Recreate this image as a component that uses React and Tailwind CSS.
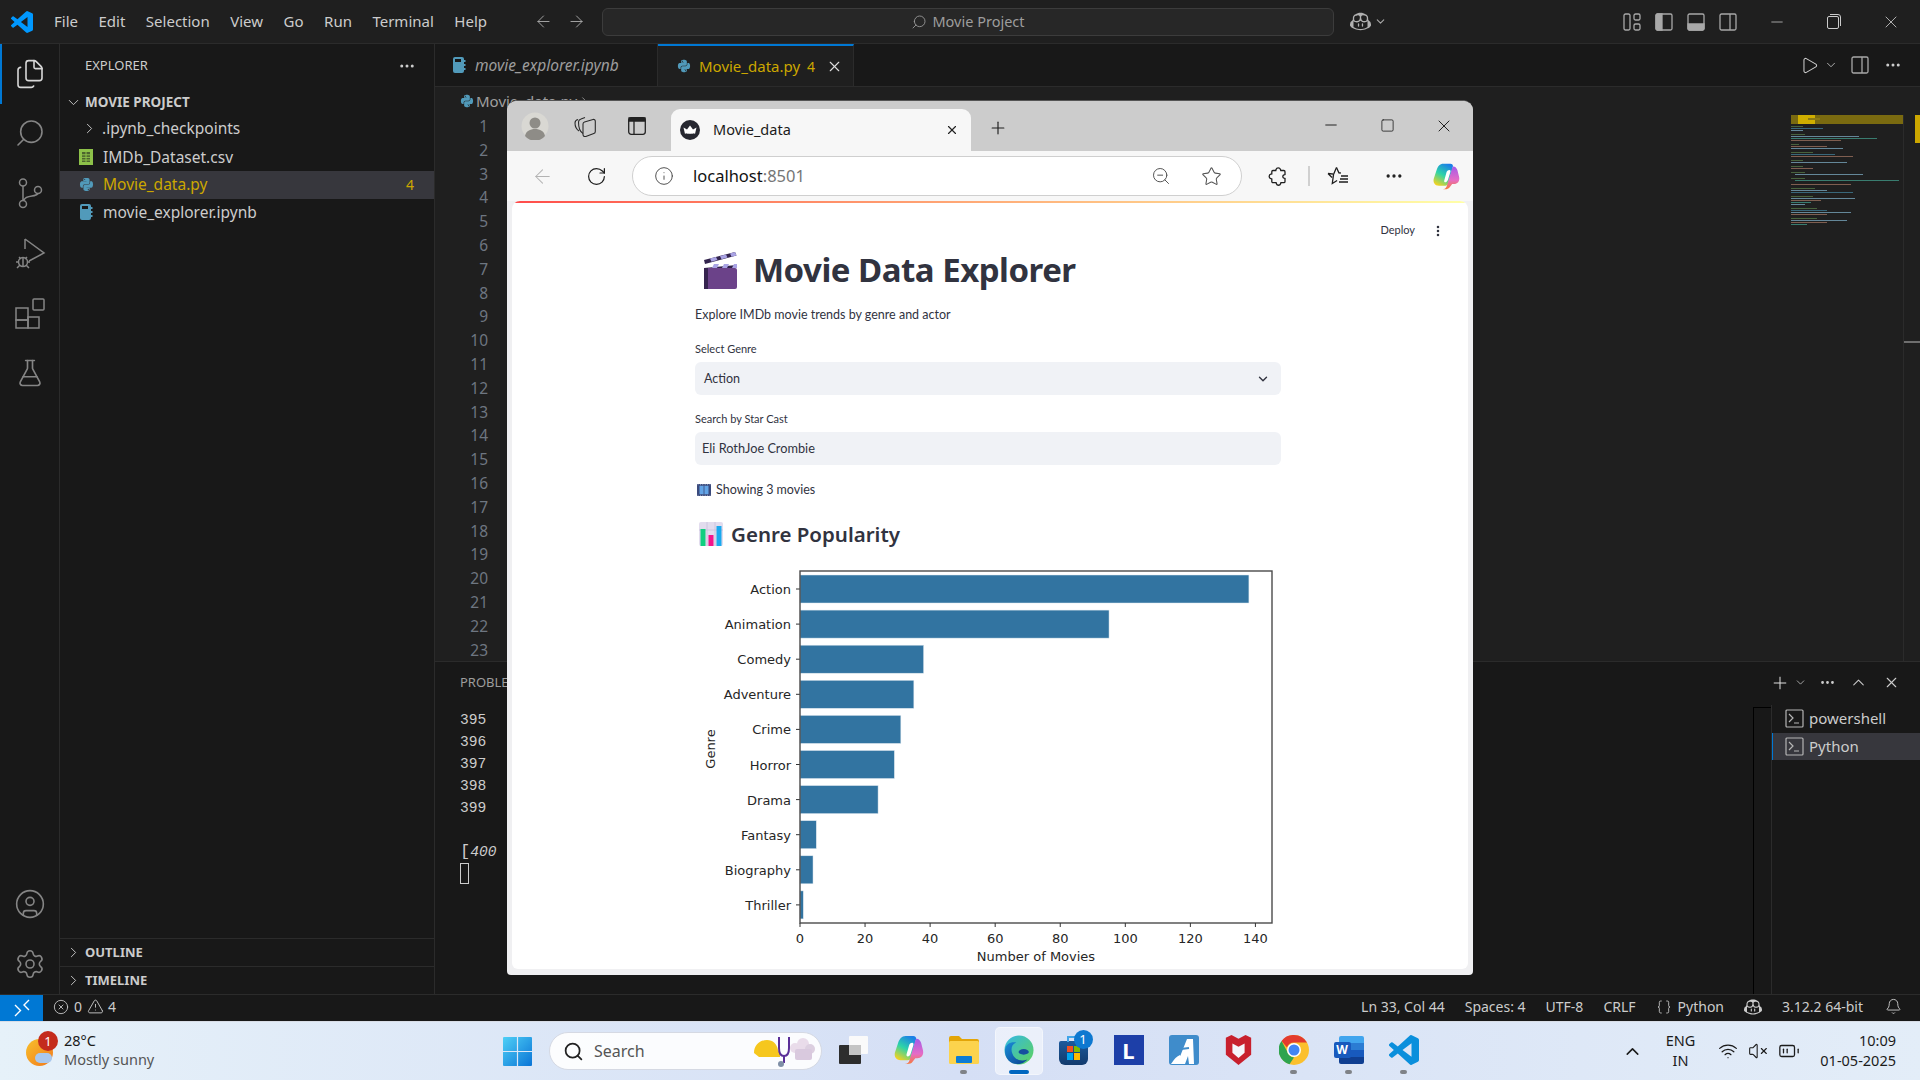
import React from "react";
import {
  ArrowLeft, ArrowRight, BatteryMedium, Bell, Braces, ChevronDown, ChevronRight, ChevronUp,
  CircleUser, CircleX, Ellipsis, EllipsisVertical, Files, FlaskConical, Info, Minus,
  Play, Plus, RotateCw, Search, Settings, Square, Star, TriangleAlert, VolumeX, Wifi, X, ZoomOut,
} from "lucide-react";
import { FaPython } from "react-icons/fa";
import { GoCopilot } from "react-icons/go";

const menus = ["File", "Edit", "Selection", "View", "Go", "Run", "Terminal", "Help"];
const lineNumbers = Array.from({ length: 23 }, (_, i) => i + 1);
const termLines = [395, 396, 397, 398, 399];
const genres = [
  ["Action", 138], ["Animation", 95], ["Comedy", 38], ["Adventure", 35], ["Crime", 31],
  ["Horror", 29], ["Drama", 24], ["Fantasy", 5], ["Biography", 4], ["Thriller", 1],
];
const ticks = [0, 20, 40, 60, 80, 100, 120, 140];

// minimap rows: y, x, width, colour
const mini = [
  [11, 0, 12, "#6a9955"], [13, 0, 32, "#4fa3c4"], [15, 0, 12, "#9cdcfe"],
  [19, 0, 14, "#6a9955"], [21, 0, 68, "#9cdcfe"], [23, 0, 86, "#4ec9b0"], [25, 0, 50, "#ce9178"],
  [29, 0, 8, "#6a9955"], [31, 0, 36, "#ce9178"], [33, 0, 52, "#9cdcfe"],
  [37, 0, 22, "#6a9955"], [39, 0, 44, "#4fa3c4"], [41, 0, 62, "#ce9178"],
  [45, 0, 12, "#6a9955"], [47, 0, 56, "#9cdcfe"], [51, 0, 12, "#6a9955"], [53, 0, 22, "#ce9178"],
  [57, 0, 14, "#6a9955"], [59, 4, 68, "#9cdcfe"], [63, 0, 14, "#6a9955"], [65, 4, 104, "#4ec9b0"],
  [69, 0, 60, "#ce9178"], [73, 0, 24, "#6a9955"], [75, 0, 36, "#9cdcfe"], [77, 0, 62, "#4fa3c4"],
  [81, 0, 22, "#6a9955"], [83, 0, 64, "#9cdcfe"], [85, 0, 30, "#ce9178"], [87, 0, 20, "#4ec9b0"], [89, 0, 14, "#9cdcfe"],
  [93, 0, 26, "#6a9955"], [95, 0, 36, "#4fa3c4"], [97, 0, 60, "#9cdcfe"], [99, 0, 36, "#ce9178"],
  [103, 0, 26, "#6a9955"], [105, 0, 56, "#9cdcfe"], [107, 0, 36, "#ce9178"], [109, 0, 16, "#4ec9b0"],
];

function VsLogo({ size = 22, color = "#0098ff" }) {
  return (
    <svg width={size} height={size} viewBox="0 0 24 24" fill={color}>
      <path d="M23.15 2.587L18.21.21a1.494 1.494 0 0 0-1.705.29l-9.46 8.63-4.12-3.128a.999.999 0 0 0-1.276.057L.327 7.261A1 1 0 0 0 .326 8.74L3.899 12 .326 15.26a1 1 0 0 0 .001 1.479L1.65 17.94a.999.999 0 0 0 1.276.057l4.12-3.128 9.46 8.63a1.492 1.492 0 0 0 1.704.29l4.942-2.377A1.5 1.5 0 0 0 24 20.06V3.939a1.5 1.5 0 0 0-.85-1.352zm-5.146 14.861L10.826 12l7.178-5.448v10.896z" />
    </svg>
  );
}

function NotebookIcon() {
  return (
    <svg width="14" height="18" viewBox="0 0 14 18">
      <rect x="1" y="1" width="11" height="16" rx="2" fill="#519aba" />
      <rect x="3" y="3" width="6" height="3" fill="#181818" />
      <rect x="12" y="4" width="1.5" height="2" fill="#519aba" />
      <rect x="12" y="8" width="1.5" height="2" fill="#519aba" />
      <rect x="12" y="12" width="1.5" height="2" fill="#519aba" />
    </svg>
  );
}

function CsvIcon() {
  return (
    <svg width="14" height="16" viewBox="0 0 14 16">
      <rect width="14" height="16" fill="#8dc149" />
      <path d="M3 3h8v10H3z" fill="#181818" opacity="0.55" />
      <path d="M3 5.8h8M3 8.4h8M3 11h8M7 3v10" stroke="#8dc149" strokeWidth="1" />
    </svg>
  );
}

function ScmIcon() {
  return (
    <svg width="32" height="32" viewBox="0 0 32 32" fill="none" stroke="#858585" strokeWidth="1.5">
      <circle cx="9" cy="5.500" r="3.500" />
      <circle cx="9" cy="27" r="3.500" />
      <circle cx="24" cy="13" r="3.500" />
      <path d="M9 9v14.500M10 23c1-3 4-3.500 8-4 3-.4 5-1 6-2.500" />
    </svg>
  );
}

function DebugIcon() {
  return (
    <svg width="32" height="32" viewBox="0 0 32 32" fill="none" stroke="#858585" strokeWidth="1.5">
      <path d="M11 2v10M11 2l19 14-15 8" />
      <circle cx="9" cy="25" r="4.5" />
      <path d="M5 20l2 2M13 20l-2 2M2 25h2.5M13.500 25H16M3 31l3-3M15 31l-3-3M9 21v8" />
    </svg>
  );
}

function ExtIcon() {
  return (
    <svg width="32" height="32" viewBox="0 0 32 32" fill="none" stroke="#858585" strokeWidth="1.5">
      <rect x="2" y="11" width="12" height="12" />
      <rect x="2" y="23" width="12" height="8" />
      <rect x="14" y="20" width="11" height="11" />
      <rect x="19" y="2" width="11" height="11" rx="1" />
    </svg>
  );
}

function RemoteIcon() {
  return (
    <svg width="18" height="18" viewBox="0 0 18 18" fill="none" stroke="#fff" strokeWidth="1.4">
      <path d="M2 6l5.500 5.500L2 17M16 1l-5 5 5 5" />
    </svg>
  );
}

function LayoutIcon({ kind }) {
  return (
    <svg width="18" height="18" viewBox="0 0 18 18" fill="none" stroke="#a8a8a8" strokeWidth="1.3">
      {kind === "custom" && (
        <g>
          <rect x="1" y="1" width="6" height="16" rx="1.500" />
          <rect x="11" y="1" width="6" height="6" rx="1.500" />
          <rect x="11" y="11" width="6" height="6" rx="1.500" />
        </g>
      )}
      {kind !== "custom" && <rect x="1" y="1" width="16" height="16" rx="1.500" />}
      {kind === "left" && <path d="M1 2.500A1.500 1.500 0 0 1 2.500 1H7v16H2.500A1.500 1.500 0 0 1 1 15.500z" fill="#a8a8a8" />}
      {kind === "bottom" && <path d="M1 11h16v4.500a1.500 1.500 0 0 1-1.500 1.500h-13A1.500 1.500 0 0 1 1 15.500z" fill="#a8a8a8" />}
      {kind === "right" && <path d="M11 1v16" />}
    </svg>
  );
}

function TerminalGlyph() {
  return (
    <svg width="19" height="19" viewBox="0 0 19 19" fill="none" stroke="#b5b5b5" strokeWidth="1.2">
      <rect x="1" y="1" width="17" height="17" rx="1" />
      <path d="M4 5l4 4-4 4M9 14h5" />
    </svg>
  );
}

function CopilotColor({ size = 28 }) {
  return (
    <svg width={size} height={size} viewBox="0 0 32 32">
      <defs>
        <linearGradient id="copA" x1="0.7" y1="0" x2="0.2" y2="1">
          <stop offset="0" stopColor="#1b7fe8" />
          <stop offset="0.5" stopColor="#2dd4a8" />
          <stop offset="1" stopColor="#f8d21c" />
        </linearGradient>
        <linearGradient id="copB" x1="0.5" y1="0" x2="0.5" y2="1">
          <stop offset="0" stopColor="#a45be8" />
          <stop offset="0.6" stopColor="#e56cc6" />
          <stop offset="1" stopColor="#f6793a" />
        </linearGradient>
      </defs>
      <path d="M13 2h8c2 0 2.500 1 3 2.500L19 24c-.5 2-2 3-4 3H8c-5 0-7-4-6-8l3-9c1.500-5 4-8 8-8z" fill="url(#copA)" />
      <path d="M24 5c3 0 4 2 5 4l2 8c1 5-2 8-6 8h-2l-3 4c-1 1.500-3 2-5 2h-3c3 0 4.500-2 5-4L23 7z" fill="url(#copB)" />
      <path d="M20 9c-2 0-3 1-3.500 3l-2.500 9c-.5 2 1 2.500 2 2 1.500-.8 2-2 2.500-3.500l2.500-8c.4-1.500 0-2.500-1-2.500z" fill="#fff" />
    </svg>
  );
}

function Clapper() {
  return (
    <svg width="36" height="38" viewBox="0 0 36 38">
      <path d="M1 17l33-3v3H1z" fill="#2f2148" />
      <rect x="1" y="17" width="33" height="21" rx="2" fill="#6b4289" />
      <rect x="1" y="17" width="4" height="21" fill="#36244f" />
      <path d="M9 17l2-4h5l-2 4zM19 17l2-4h5l-2 4zM29 17l2-4h3v4z" fill="#a9a3e4" />
      <path d="M1 9l31-8 1.500 3.500L2 13z" fill="#33244d" />
      <path d="M7 7.500l6-1.600 1.500 3.200-6 1.600zM17 5l6-1.600 1.500 3.200-6 1.600zM27 2.500l5-1.400 1.500 3.300-5 1.400z" fill="#a9a3e4" />
    </svg>
  );
}

function ChartEmoji() {
  return (
    <svg width="24" height="24" viewBox="0 0 24 24">
      <rect width="24" height="24" rx="2" fill="#e2dcee" />
      <path d="M0 8h24M8 0v24M16 0v24" stroke="#c9c0da" strokeWidth="0.8" />
      <rect x="1.500" y="7" width="5" height="17" fill="#10cf80" />
      <rect x="9.500" y="13" width="5" height="11" fill="#f4148c" />
      <rect x="17.500" y="4" width="5" height="20" fill="#1aa9ee" />
    </svg>
  );
}

function FilmEmoji() {
  return (
    <svg width="14" height="12" viewBox="0 0 14 12">
      <rect width="14" height="12" fill="#3a4a7c" />
      <rect x="2.500" y="1.800" width="9" height="8.400" fill="#62a4e6" />
      <path d="M7 1.800v8.400" stroke="#3a4a7c" strokeWidth="0.8" />
      <path d="M.6.7h.8M3 .7h.8M5.400.7h.8M7.800.7h.8M10.200.7h.8M12.600.7h.8M.6 11.300h.8M3 11.300h.8M5.400 11.300h.8M7.800 11.300h.8M10.200 11.300h.8M12.600 11.300h.8" stroke="#dfe6f5" strokeWidth="0.7" />
    </svg>
  );
}

function Avatar() {
  return (
    <svg width="28" height="28" viewBox="0 0 28 28">
      <circle cx="14" cy="14" r="13.500" fill="#d9d8d3" />
      <circle cx="14" cy="11" r="5.500" fill="#8e8c87" />
      <path d="M4 24c1-5 5-7 10-7s9 2 10 7a13 13 0 0 1-20 0z" fill="#8e8c87" />
    </svg>
  );
}

function Collections() {
  return (
    <svg width="22" height="22" viewBox="0 0 22 22" fill="none" stroke="#2a2a2a" strokeWidth="1.1">
      <path d="M5 16C2 14 1 11 1 8c0-2 1-3 3-3.500" />
      <path d="M9 18.500C6.500 17 4.500 13 4.500 7c0-1.500 1-2.500 2.500-3l4-1.500" />
      <path d="M9 9c0-1 .6-1.700 1.500-2L19 4.500c1.200-.3 2.300.4 2.300 1.700v10.300c0 1-.6 1.800-1.500 2.100l-8 2.900c-1.400.5-2.800-.5-2.800-2z" />
    </svg>
  );
}

function TabsIcon() {
  return (
    <svg width="18" height="18" viewBox="0 0 18 18" fill="none" stroke="#222" strokeWidth="1.3">
      <rect x="0.700" y="0.700" width="16.600" height="16.600" rx="2.500" />
      <path d="M1 1h16v3H1z" fill="#222" />
      <path d="M6 4v13" />
    </svg>
  );
}

function Crown() {
  return (
    <svg width="20" height="20" viewBox="0 0 20 20">
      <circle cx="10" cy="10" r="10" fill="#262730" />
      <path d="M3.500 7.500l3.500 2L10 5.500l3 4 3.500-2-1.500 6.500H5z" fill="#fff" />
      <path d="M5.500 13.500c2 1 7 1 9 0" stroke="#262730" strokeWidth="0.8" fill="none" />
    </svg>
  );
}

function PuzzleOutline() {
  return (
    <svg width="20" height="20" viewBox="0 0 20 20" fill="none" stroke="#1f1f1f" strokeWidth="1.3">
      <path d="M8 3.500a2.400 2.400 0 0 1 4.500 0l.3 1h3c.7 0 1.200.5 1.200 1.200v2.800l-1 .3a1.800 1.800 0 0 0 0 3.400l1 .3v3c0 .7-.5 1.200-1.200 1.200h-2.900l-.3 1a2.200 2.200 0 0 1-4.200 0l-.3-1H5c-.7 0-1.200-.5-1.200-1.200v-2.600l-1-.3a2.300 2.300 0 0 1 0-4.400l1-.3V5.700c0-.7.5-1.200 1.200-1.200h2.800z" />
    </svg>
  );
}

function Favorites() {
  return (
    <svg width="22" height="20" viewBox="0 0 22 20" fill="none" stroke="#1f1f1f" strokeWidth="1.3">
      <path d="M9.500 1.500l2.400 5.300 2 .2M1 7.500l5.600.5-1.300 9.500 4.800-3M1 7.500l4 4" />
      <path d="M9.500 1.500L6.800 7.800M14 10h7M13 13h8M12 16h9" />
    </svg>
  );
}

function WinLogo() {
  return (
    <svg width="29" height="29" viewBox="0 0 29 29">
      <defs>
        <linearGradient id="win" x1="0" y1="0" x2="1" y2="1">
          <stop offset="0" stopColor="#4fd0f6" />
          <stop offset="1" stopColor="#0a74d6" />
        </linearGradient>
      </defs>
      <path d="M1 0h12.900v13.900H0V1a1 1 0 0 1 1-1zM15.100 0H28a1 1 0 0 1 1 1v12.900H15.100zM0 15.100h13.900V29H1a1 1 0 0 1-1-1zM15.100 15.100H29V28a1 1 0 0 1-1 1H15.100z" fill="url(#win)" />
    </svg>
  );
}

function Weather() {
  return (
    <div className="relative w-[34px] h-[34px]">
      <div className="absolute left-[2px] top-[5px] w-[27px] h-[27px] rounded-full bg-linear-to-br from-[#f7c02c] to-[#f0781c]" />
      <div className="absolute left-[11px] top-[19px] w-[17px] h-[10px] rounded-full bg-[#a9c8ee]" />
      <div className="absolute left-[14px] -top-[3px] w-[20px] h-[20px] rounded-full bg-[#c42b1c] text-white text-[13px] leading-[20px] text-center">1</div>
    </div>
  );
}

function SearchDoodles() {
  return (
    <svg width="62" height="34" viewBox="0 0 62 34">
      <path d="M1 19c0-8 6-13 13-13 6 0 10 4 11 10l2 4v3H6z" fill="#f6c71e" />
      <path d="M26 3v11c0 5 2 8 5 8s5-3 5-8V3" fill="none" stroke="#5a2e98" strokeWidth="2" />
      <path d="M31 22v7" stroke="#5a2e98" strokeWidth="2" />
      <circle cx="28" cy="30" r="3" fill="#7f8fa6" />
      <circle cx="42" cy="14" r="5" fill="#e9dcea" />
      <circle cx="50" cy="10" r="6" fill="#e9dcea" />
      <circle cx="57" cy="15" r="5" fill="#dccfe0" />
      <rect x="42" y="15" width="17" height="11" rx="2" fill="#d9c9de" />
    </svg>
  );
}

function TaskView() {
  return (
    <svg width="30" height="28" viewBox="0 0 30 28">
      <rect x="10" y="0" width="19" height="18" rx="1" fill="#fafafa" />
      <rect x="0" y="9" width="22" height="19" rx="1" fill="#2d2d2d" />
      <rect x="10" y="9" width="12" height="10" fill="#c4c4c4" />
    </svg>
  );
}

function FolderIcon() {
  return (
    <svg width="30" height="28" viewBox="0 0 30 28">
      <path d="M0 2a2 2 0 0 1 2-2h8l3 3h15a2 2 0 0 1 2 2v3H0z" fill="#e3a508" />
      <rect y="5" width="30" height="23" rx="1.500" fill="#fcd34d" />
      <rect x="7" y="20" width="16" height="7" rx="1" fill="#0c7cd5" />
    </svg>
  );
}

function EdgeIcon() {
  return (
    <svg width="30" height="30" viewBox="0 0 32 32">
      <defs>
        <linearGradient id="edgeA" x1="0" y1="0" x2="1" y2="1">
          <stop offset="0" stopColor="#33b7e8" />
          <stop offset="1" stopColor="#5fd35a" />
        </linearGradient>
        <linearGradient id="edgeB" x1="0" y1="0" x2="1" y2="1">
          <stop offset="0" stopColor="#1a8fd8" />
          <stop offset="1" stopColor="#0b3f8f" />
        </linearGradient>
      </defs>
      <circle cx="16" cy="16" r="15.500" fill="url(#edgeA)" />
      <path d="M1 17C1 9 8 7 13 8c-5 2-6 7-4 12 2 6 9 9 16 6-4 4-8 5-11 5C7 31 1 25 1 17z" fill="url(#edgeB)" />
      <ellipse cx="21" cy="18" rx="5.500" ry="3" fill="#16509f" />
    </svg>
  );
}

function StoreIcon() {
  return (
    <div className="relative w-[30px] h-[30px]">
      <div className="absolute left-0 bottom-0 w-[29px] h-[24px] rounded-b-[6px] rounded-t-[2px] bg-linear-to-b from-[#1d5a9c] to-[#123a6d] grid grid-cols-2 gap-[1px] px-[8px] py-[5px]">
        <div className="bg-[#f25022]" />
        <div className="bg-[#7fba00]" />
        <div className="bg-[#00a4ef]" />
        <div className="bg-[#ffb900]" />
      </div>
      <div className="absolute left-[8px] top-[1px] w-[12px] h-[6px] border-t-2 border-l-2 border-[#41a4e8]" />
      <div className="absolute left-[15px] -top-[5px] w-[19px] h-[19px] rounded-full bg-[#0e78d0] text-white text-[13px] leading-[19px] text-center">1</div>
    </div>
  );
}

function McAfee() {
  return (
    <svg width="27" height="30" viewBox="0 0 27 32">
      <path d="M0 3l6-3 7.500 4L21 0l6 3v18l-13.500 11L0 21z" fill="#c8202d" />
      <path d="M7 9l6.500 3.500L20 9v10l-6.500 5.500L7 19z" fill="#f4f5fa" />
    </svg>
  );
}

function ChromeIcon() {
  return (
    <svg width="30" height="30" viewBox="0 0 30 30">
      <circle cx="15" cy="15" r="15" fill="#fbc02d" />
      <path d="M15 0a15 15 0 0 1 13 7.500H15a7.500 7.500 0 0 0-7 5L2.500 6A15 15 0 0 1 15 0z" fill="#e33b2e" />
      <path d="M2.500 6L9 18a7.500 7.500 0 0 0 6 4.500L10.500 29.300A15 15 0 0 1 2.500 6z" fill="#2ea44f" />
      <circle cx="15" cy="15" r="7" fill="#fff" />
      <circle cx="15" cy="15" r="5.500" fill="#4285f4" />
    </svg>
  );
}

function WordIcon() {
  return (
    <div className="relative w-[30px] h-[28px]">
      <div className="absolute right-0 top-0 w-[25px] h-[28px] rounded-[2px] overflow-hidden flex flex-col">
        <div className="h-[7px] bg-[#41a5ee]" />
        <div className="h-[7px] bg-[#2b7cd3]" />
        <div className="h-[7px] bg-[#185abd]" />
        <div className="h-[7px] bg-[#103f91]" />
      </div>
      <div className="absolute left-0 top-[6px] w-[17px] h-[16px] rounded-[2px] bg-[#185abd] text-white font-bold text-[12px] leading-[16px] text-center">W</div>
    </div>
  );
}

function AcrobatLike() {
  return (
    <div className="relative w-[30px] h-[30px] rounded-[3px] bg-[#3f8ccb] overflow-hidden">
      <svg width="30" height="30" viewBox="0 0 30 30">
        <path d="M8 29L18 4h6l1 25h-5l-1-8-3 8zM2 29c3-5 6-8 9-9 1 3 0 7-2 9z" fill="#fff" />
        <path d="M12 14l8-1" stroke="#3f8ccb" strokeWidth="2" />
      </svg>
    </div>
  );
}

function TaskCell({ children, dot, active }) {
  return (
    <div className="relative w-[55px] h-[48px] flex items-center justify-center">
      {active && <div className="absolute left-[4px] top-0 w-[48px] h-[48px] rounded-[5px] bg-white/50 border border-white/40" />}
      <div className="relative -mt-[3px]">{children}</div>
      {dot && <div className="absolute left-[24px] bottom-[1px] w-[7px] h-[4px] rounded-full bg-[#7f8287]" />}
      {active && <div className="absolute left-[18px] bottom-[1px] w-[20px] h-[4px] rounded-full bg-[#0067c0]" />}
    </div>
  );
}

function Chart() {
  const X0 = 105;
  const unit = 3.253;
  return (
    <svg width="586" height="408" viewBox="0 0 586 408" className="font-['DejaVu_Sans',sans-serif]">
      {genres.map(([name, val], i) => {
        const top = 14 + i * 35.1;
        return (
          <g key={name}>
            <rect x={X0} y={top} width={val * unit} height="28" fill="#3274a1" stroke="#dbe6ee" strokeWidth="0.5" />
            <path d={`M${X0 - 4} ${top + 14}H${X0}`} stroke="#333" strokeWidth="1" />
            <text x="96" y={top + 19} textAnchor="end" fontSize="13" fill="#262626">{name}</text>
          </g>
        );
      })}
      <rect x={X0} y="10" width="472" height="352" fill="none" stroke="#4a4a4a" strokeWidth="1.4" />
      {ticks.map((t) => (
        <g key={t}>
          <path d={`M${X0 + t * unit} 362v4`} stroke="#333" strokeWidth="1" />
          <text x={X0 + t * unit} y="382" textAnchor="middle" fontSize="13" fill="#262626">{t}</text>
        </g>
      ))}
      <text x="341" y="400" textAnchor="middle" fontSize="13" fill="#262626">Number of Movies</text>
      <text transform="translate(20 188) rotate(-90)" textAnchor="middle" fontSize="13" fill="#262626">Genre</text>
    </svg>
  );
}

function BrowserWindow() {
  return (
    <div className="absolute left-[507px] top-[100px] w-[966px] h-[875px] rounded-t-[10px] rounded-b-[4px] overflow-hidden flex flex-col bg-[#f0f0f2] text-[#1f1f1f] border-t border-[#555]">
      {/* tab strip */}
      <div className="h-[50px] bg-[#cccccc] flex items-end shrink-0">
        <div className="w-[164px] h-[50px] flex items-center">
          <div className="ml-[14px]"><Avatar /></div>
          <div className="ml-[25px]"><Collections /></div>
          <div className="ml-[32px]"><TabsIcon /></div>
        </div>
        <div className="w-[300px] h-[42px] bg-[#f7f7f7] rounded-t-[9px] flex items-center pl-[9px] pr-[12px]">
          <Crown />
          <span className="ml-[13px] text-[14.5px] text-[#1b1b1b]">Movie_data</span>
          <X size={14} strokeWidth={2} className="ml-auto text-[#222]" />
        </div>
        <div className="h-[50px] flex items-center ml-[17px] pt-[4px]">
          <Plus size={20} strokeWidth={1.4} className="text-[#1f1f1f]" />
        </div>
        <div className="ml-auto h-[50px] flex items-start pt-[15px]">
          <Minus size={18} strokeWidth={1.2} className="text-[#111]" />
          <Square size={15} strokeWidth={1.2} className="ml-[40px] mt-[2px] text-[#111]" />
          <X size={20} strokeWidth={1.1} className="ml-[39px] text-[#111]" />
          <div className="w-[19px]" />
        </div>
      </div>
      {/* toolbar */}
      <div className="h-[50px] bg-[#f7f7f7] flex items-center shrink-0">
        <ArrowLeft size={23} strokeWidth={1.1} className="ml-[24px] text-[#b3b3b3]" />
        <RotateCw size={21} strokeWidth={1.4} className="ml-[32px] text-[#1f1f1f]" />
        <div className="ml-[25px] w-[610px] h-[40px] rounded-full bg-white border border-[#cfcfcf] flex items-center">
          <Info size={20} strokeWidth={1.1} className="ml-[21px] text-[#444]" />
          <span className="ml-[19px] text-[16.5px] text-[#111]">localhost<span className="text-[#767676]">:8501</span></span>
          <ZoomOut size={20} strokeWidth={1.2} className="ml-auto text-[#555] " />
          <Star size={21} strokeWidth={1.2} className="ml-[30px] mr-[19px] text-[#555]" />
        </div>
        <div className="ml-[26px]"><PuzzleOutline /></div>
        <div className="ml-[20px] w-[2px] h-[20px] bg-[#d0d0d0]" />
        <div className="ml-[17px]"><Favorites /></div>
        <Ellipsis size={20} strokeWidth={2} className="ml-[35px] text-[#222]" />
        <div className="ml-[28px]"><CopilotColor /></div>
      </div>
      {/* page */}
      <div className="mx-[5px] h-[768px] rounded-t-[8px] rounded-b-[6px] bg-white overflow-hidden flex flex-col text-[#31333f] font-['Lato',sans-serif]">
        <div className="h-[2px] shrink-0 bg-linear-to-r from-[#ff4b4b] to-[#ffffa8] " />
        <div className="h-[28px] mt-[14px] flex items-center justify-end pr-[23px]">
          <span className="text-[11px]">Deploy</span>
          <EllipsisVertical size={14} strokeWidth={2.4} className="ml-[16px]" />
        </div>
        <div className="ml-[183px] w-[586px] flex flex-col">
          <div className="h-[52px] flex items-center pl-[8px]">
            <Clapper />
            <h1 className="ml-[14px] text-[33px] font-bold tracking-[-0.5px] font-['Noto_Sans',sans-serif]">Movie Data Explorer</h1>
          </div>
          <p className="mt-[8px] h-[20px] leading-[21px] text-[12.5px]">Explore IMDb movie trends by genre and actor</p>
          <label className="mt-[16px] h-[16px] leading-[18px] text-[11px]">Select Genre</label>
          <div className="mt-[6px] h-[33px] rounded-[6px] bg-[#f0f2f6] flex items-center justify-between pl-[9px] pr-[11px] text-[12.5px]">
            <span className="mt-[1px]">Action</span>
            <ChevronDown size={14} strokeWidth={2.4} />
          </div>
          <label className="mt-[15px] h-[16px] leading-[18px] text-[11px]">Search by Star Cast</label>
          <div className="mt-[6px] h-[33px] rounded-[6px] bg-[#f0f2f6] flex items-center pl-[7px] text-[12.75px]">Eli RothJoe Crombie</div>
          <div className="mt-[16px] h-[18px] flex items-center pl-[2px] text-[12.5px]">
            <FilmEmoji />
            <span className="ml-[5px] mt-[1px]">Showing 3 movies</span>
          </div>
          <div className="mt-[17px] h-[36px] flex items-center pl-[4px]">
            <ChartEmoji />
            <h2 className="ml-[8px] text-[20.5px] font-semibold font-['Noto_Sans',sans-serif]">Genre Popularity</h2>
          </div>
          <div className="mt-[9px]"><Chart /></div>
        </div>
      </div>
    </div>
  );
}

export default function App() {
  return (
    <div className="relative w-[1920px] h-[1080px] overflow-hidden flex flex-col bg-[#1f1f1f] text-[#cccccc] font-['Noto_Sans',sans-serif]">
      {/* title bar */}
      <header className="h-[44px] shrink-0 bg-[#1f1f1f] border-b border-[#2b2b2b] flex items-center text-[15px]">
        <div className="w-[54px] pl-[11px]"><VsLogo /></div>
        <nav className="flex gap-[20.500px] w-[477px]">
          {menus.map((m) => <span key={m}>{m}</span>)}
        </nav>
        <ArrowLeft size={19} strokeWidth={1.2} className="ml-[3px] text-[#a8a8a8]" />
        <ArrowRight size={19} strokeWidth={1.2} className="ml-[14px] text-[#a8a8a8]" />
        <div className="ml-[16px] w-[732px] h-[28px] rounded-[6px] border border-[#3c3c3c] bg-[#272727] flex items-center justify-center text-[14.5px] text-[#9d9d9d]">
          <Search size={16} strokeWidth={1.3} className="-scale-x-100 mr-[5px]" />
          Movie Project
        </div>
        <GoCopilot size={21} className="ml-[16px] text-[#b0b0b0]" />
        <ChevronDown size={13} className="ml-[3px] text-[#a8a8a8]" />
        <div className="ml-[236px] flex gap-[14px]">
          <LayoutIcon kind="custom" />
          <LayoutIcon kind="left" />
          <LayoutIcon kind="bottom" />
          <LayoutIcon kind="right" />
        </div>
        <Minus size={18} strokeWidth={1} className="ml-[31px] text-[#ccc]" />
        <svg width="14" height="15" viewBox="0 0 14 15" fill="none" stroke="#ccc" strokeWidth="1" className="ml-[41px]">
          <rect x="0.500" y="2.500" width="11" height="12" rx="1.500" />
          <path d="M3 .5h8a2.500 2.500 0 0 1 2.500 2.500v9" />
        </svg>
        <X size={20} strokeWidth={1} className="ml-[40px] text-[#ccc]" />
      </header>

      <div className="flex-1 flex min-h-0 bg-[#181818]">
        {/* activity bar */}
        <aside className="w-[60px] shrink-0 border-r border-[#2b2b2b] flex flex-col items-center text-[#858585]">
          <div className="w-full h-[60px] border-l-2 border-[#0078d4] flex items-center justify-center pr-[2px] text-[#d7d7d7]">
            <Files size={32} strokeWidth={1.2} />
          </div>
          <Search size={32} strokeWidth={1.2} className="mt-[13px] -scale-x-100" />
          <div className="mt-[28px]"><ScmIcon /></div>
          <div className="mt-[28px]"><DebugIcon /></div>
          <div className="mt-[28px]"><ExtIcon /></div>
          <FlaskConical size={30} strokeWidth={1.3} className="mt-[29px]" />
          <CircleUser size={32} strokeWidth={1.2} className="mt-auto" />
          <Settings size={32} strokeWidth={1.2} className="mt-[28px] mb-[14px]" />
        </aside>

        {/* explorer */}
        <aside className="w-[375px] shrink-0 border-r border-[#2b2b2b] flex flex-col">
          <div className="h-[44px] shrink-0 flex items-center justify-between pl-[25px] pr-[18px] text-[13px]">
            <span>EXPLORER</span>
            <Ellipsis size={18} />
          </div>
          <div className="h-[28px] flex items-center pl-[5px] text-[13.5px] font-bold">
            <ChevronDown size={17} strokeWidth={1.3} className="mr-[3px]" />
            MOVIE PROJECT
          </div>
          <div className="text-[15.5px] text-[#cccccc]">
            <div className="h-[27.5px] flex items-center pl-[21px] pb-[2px]">
              <ChevronRight size={17} strokeWidth={1.3} className="mr-[4px]" />
              .ipynb_checkpoints
            </div>
            <div className="h-[27.5px] flex items-center pl-[19px]">
              <CsvIcon />
              <span className="ml-[10px]">IMDb_Dataset.csv</span>
            </div>
            <div className="h-[27.5px] flex items-center pl-[19px] pr-[20px] bg-[#37373d] text-[#cca700]">
              <FaPython size={15} className="text-[#519aba]" />
              <span className="ml-[9px] -mt-[1px]">Movie_data.py</span>
              <span className="ml-auto text-[14px]">4</span>
            </div>
            <div className="h-[27.5px] flex items-center pl-[19px]">
              <NotebookIcon />
              <span className="ml-[10px]">movie_explorer.ipynb</span>
            </div>
          </div>
          <div className="mt-auto h-[28px] border-t border-[#2b2b2b] flex items-center pl-[5px] text-[13px] font-bold">
            <ChevronRight size={17} strokeWidth={1.3} className="mr-[3px]" />
            OUTLINE
          </div>
          <div className="h-[28px] border-t border-[#2b2b2b] flex items-center pl-[5px] text-[13px] font-bold">
            <ChevronRight size={17} strokeWidth={1.3} className="mr-[3px]" />
            TIMELINE
          </div>
        </aside>

        {/* editor + panel */}
        <main className="flex-1 min-w-0 flex flex-col">
          <div className="h-[43px] shrink-0 flex items-stretch border-b border-[#2b2b2b] bg-[#181818]">
            <div className="w-[223px] flex items-center pl-[17px] border-r border-[#2b2b2b] text-[#9d9d9d] italic text-[15.5px]">
              <NotebookIcon />
              <span className="ml-[9px] mt-[1px]">movie_explorer.ipynb</span>
            </div>
            <div className="w-[196px] flex items-center pl-[19px] bg-[#1f1f1f] border-t-2 border-[#0078d4] border-r border-r-[#2b2b2b] text-[#cca700] text-[15px]">
              <FaPython size={14} className="text-[#519aba]" />
              <span className="ml-[8px]">Movie_data.py</span>
              <span className="ml-[7px] text-[14px]">4</span>
              <X size={17} strokeWidth={1.6} className="ml-[11px] text-[#ddd]" />
            </div>
            <div className="ml-auto flex items-center pr-[18px]">
              <Play size={19} strokeWidth={1.3} className="text-[#cfcfcf]" />
              <ChevronDown size={14} strokeWidth={1.4} className="ml-[5px]" />
              <div className="ml-[13px]"><LayoutIcon kind="right" /></div>
              <Ellipsis size={18} className="ml-[15px]" />
            </div>
          </div>

          <div className="flex-1 min-h-0 bg-[#1f1f1f] flex flex-col overflow-hidden">
            <div className="h-[28px] shrink-0 flex items-center pl-[25px] text-[15px] text-[#a0a0a0]">
              <FaPython size={14} className="text-[#519aba] mr-[2px]" />
              <span>Movie_data.py</span>
              <ChevronRight size={15} strokeWidth={1.3} />
            </div>
            <div className="h-[546px] flex">
              <div className="w-[53px] text-right text-[#6e7681] text-[15.5px]">
                {lineNumbers.map((n) => <div key={n} className="h-[23.800px] leading-[23.800px]">{n}</div>)}
              </div>
              <svg width="112" height="112" viewBox="0 0 112 112" className="ml-auto">
                <rect width="112" height="9" fill="#7a6a10" />
                <rect x="7" width="17" height="9" fill="#cfae00" />
                <rect x="17" y="3" width="12" height="2" fill="#8c7a14" />
                {mini.map(([y, x, w, c]) => <rect key={y} x={x} y={y} width={w} height="1" fill={c} opacity="0.55" />)}
              </svg>
              <div className="w-[17px] border-l border-[#2b2b2b] relative">
                <div className="ml-[11px] w-[5px] h-[28px] bg-[#cca700]" />
                <div className="absolute top-[226px] left-0 w-full h-[2px] bg-[#6e6e6e]" />
              </div>
            </div>
          </div>

          <div className="h-[333px] shrink-0 border-t border-[#2b2b2b] bg-[#181818] flex">
            <div className="flex-1 min-w-0 flex flex-col">
              <div className="h-[43px] flex items-center pl-[25px] pb-[2px] text-[13px] text-[#9d9d9d]">PROBLEMS</div>
              <div className="pl-[25px] pt-[4px] font-['Liberation_Mono',monospace] text-[14.600px] text-[#cccccc]">
                {termLines.map((n) => <div key={n} className="h-[22px] leading-[22px]">{n}</div>)}
                <div className="h-[22px]" />
                <div className="h-[22px] leading-[22px]"><span className="text-[17px]">[</span><span className="italic">400</span></div>
                <div className="w-[9px] h-[21px] border border-[#ccc]" />
              </div>
            </div>
            <div className="w-[18px] mt-[45px] border-l border-t border-black" />
            <div className="w-[149px] shrink-0 flex flex-col">
              <div className="h-[43px] flex items-center pb-[2px]">
                <Plus size={20} strokeWidth={1.2} className="ml-[-1px] text-[#e0e0e0]" />
                <ChevronDown size={13} strokeWidth={1.4} className="ml-[4px]" />
                <Ellipsis size={17} className="ml-[12px]" />
                <ChevronUp size={19} strokeWidth={1.3} className="ml-[13px]" />
                <X size={17} strokeWidth={1.5} className="ml-[15px]" />
              </div>
              <div className="flex-1 border-l border-[#2b2b2b] text-[15px]">
                <div className="h-[28px] flex items-center pl-[13px] pb-[2px]">
                  <TerminalGlyph />
                  <span className="ml-[5px]">powershell</span>
                </div>
                <div className="h-[27px] flex items-center pl-[12px] bg-[#37373d] border-l border-[#0078d4]">
                  <TerminalGlyph />
                  <span className="ml-[5px]">Python</span>
                </div>
              </div>
            </div>
          </div>
        </main>
      </div>

      {/* status bar */}
      <footer className="h-[27px] shrink-0 bg-[#181818] border-t border-[#2b2b2b] flex items-center pb-[3px] text-[14px] text-[#cccccc]">
        <div className="w-[43px] h-[27px] -mb-[3px] bg-[#0078d4] flex items-center justify-center"><RemoteIcon /></div>
        <CircleX size={16} strokeWidth={1.3} className="ml-[10px]" />
        <span className="ml-[5px]">0</span>
        <TriangleAlert size={17} strokeWidth={1.3} className="ml-[5px]" />
        <span className="ml-[4px]">4</span>
        <div className="ml-auto flex items-center pr-[18px] gap-[20px]">
          <span>Ln 33, Col 44</span>
          <span>Spaces: 4</span>
          <span>UTF-8</span>
          <span>CRLF</span>
          <span className="flex items-center gap-[6px]"><Braces size={16} strokeWidth={1.3} />Python</span>
          <GoCopilot size={18} />
          <span>3.12.2 64-bit</span>
          <Bell size={17} strokeWidth={1.3} className="ml-[2px]" />
        </div>
      </footer>

      {/* taskbar */}
      <div className="h-[59px] shrink-0 border-t border-[#d8dde6] bg-linear-to-r from-[#e6f1f9] via-[#d5dff5] to-[#e3edf8] flex items-center text-[#1b1b1b] text-[14.5px]">
        <div className="w-[503px] flex items-center pl-[24px]">
          <Weather />
          <div className="ml-[6px] leading-[19px] pb-[3px]">
            <div>28°C</div>
            <div className="text-[#555]">Mostly sunny</div>
          </div>
        </div>
        <WinLogo />
        <div className="ml-[17px] w-[273px] h-[38px] rounded-full bg-white/90 border border-[#d5d9e3] flex items-center pl-[13px] pr-[6px]">
          <Search size={21} strokeWidth={2} className="text-[#222]" />
          <span className="ml-[10px] -mt-[1px] text-[16px] text-[#555]">Search</span>
          <div className="ml-auto"><SearchDoodles /></div>
        </div>
        <div className="ml-[4px] flex">
          <TaskCell><TaskView /></TaskCell>
          <TaskCell><CopilotColor size={31} /></TaskCell>
          <TaskCell dot><FolderIcon /></TaskCell>
          <TaskCell active><EdgeIcon /></TaskCell>
          <TaskCell><StoreIcon /></TaskCell>
          <TaskCell>
            <div className="w-[30px] h-[30px] bg-[#1d3fa8] text-white font-bold text-[22px] leading-[30px] text-center">L</div>
          </TaskCell>
          <TaskCell><AcrobatLike /></TaskCell>
          <TaskCell><McAfee /></TaskCell>
          <TaskCell dot><ChromeIcon /></TaskCell>
          <TaskCell dot><WordIcon /></TaskCell>
          <TaskCell dot><VsLogo size={30} color="#0a8fdc" /></TaskCell>
        </div>
        <div className="flex-1 flex items-center justify-end pr-[24px]">
          <ChevronUp size={21} strokeWidth={1.8} className="mr-[23px]" />
          <div className="text-center leading-[20px] mr-[23px] pb-[2px]"><div>ENG</div><div>IN</div></div>
          <Wifi size={20} strokeWidth={1.5} className="mr-[10px]" />
          <VolumeX size={20} strokeWidth={1.3} className="mr-[10px]" />
          <BatteryMedium size={22} strokeWidth={1.4} className="mr-[20px]" />
          <div className="text-right leading-[20px] pb-[3px]"><div>10:09</div><div>01-05-2025</div></div>
        </div>
      </div>

      <BrowserWindow />
    </div>
  );
}
